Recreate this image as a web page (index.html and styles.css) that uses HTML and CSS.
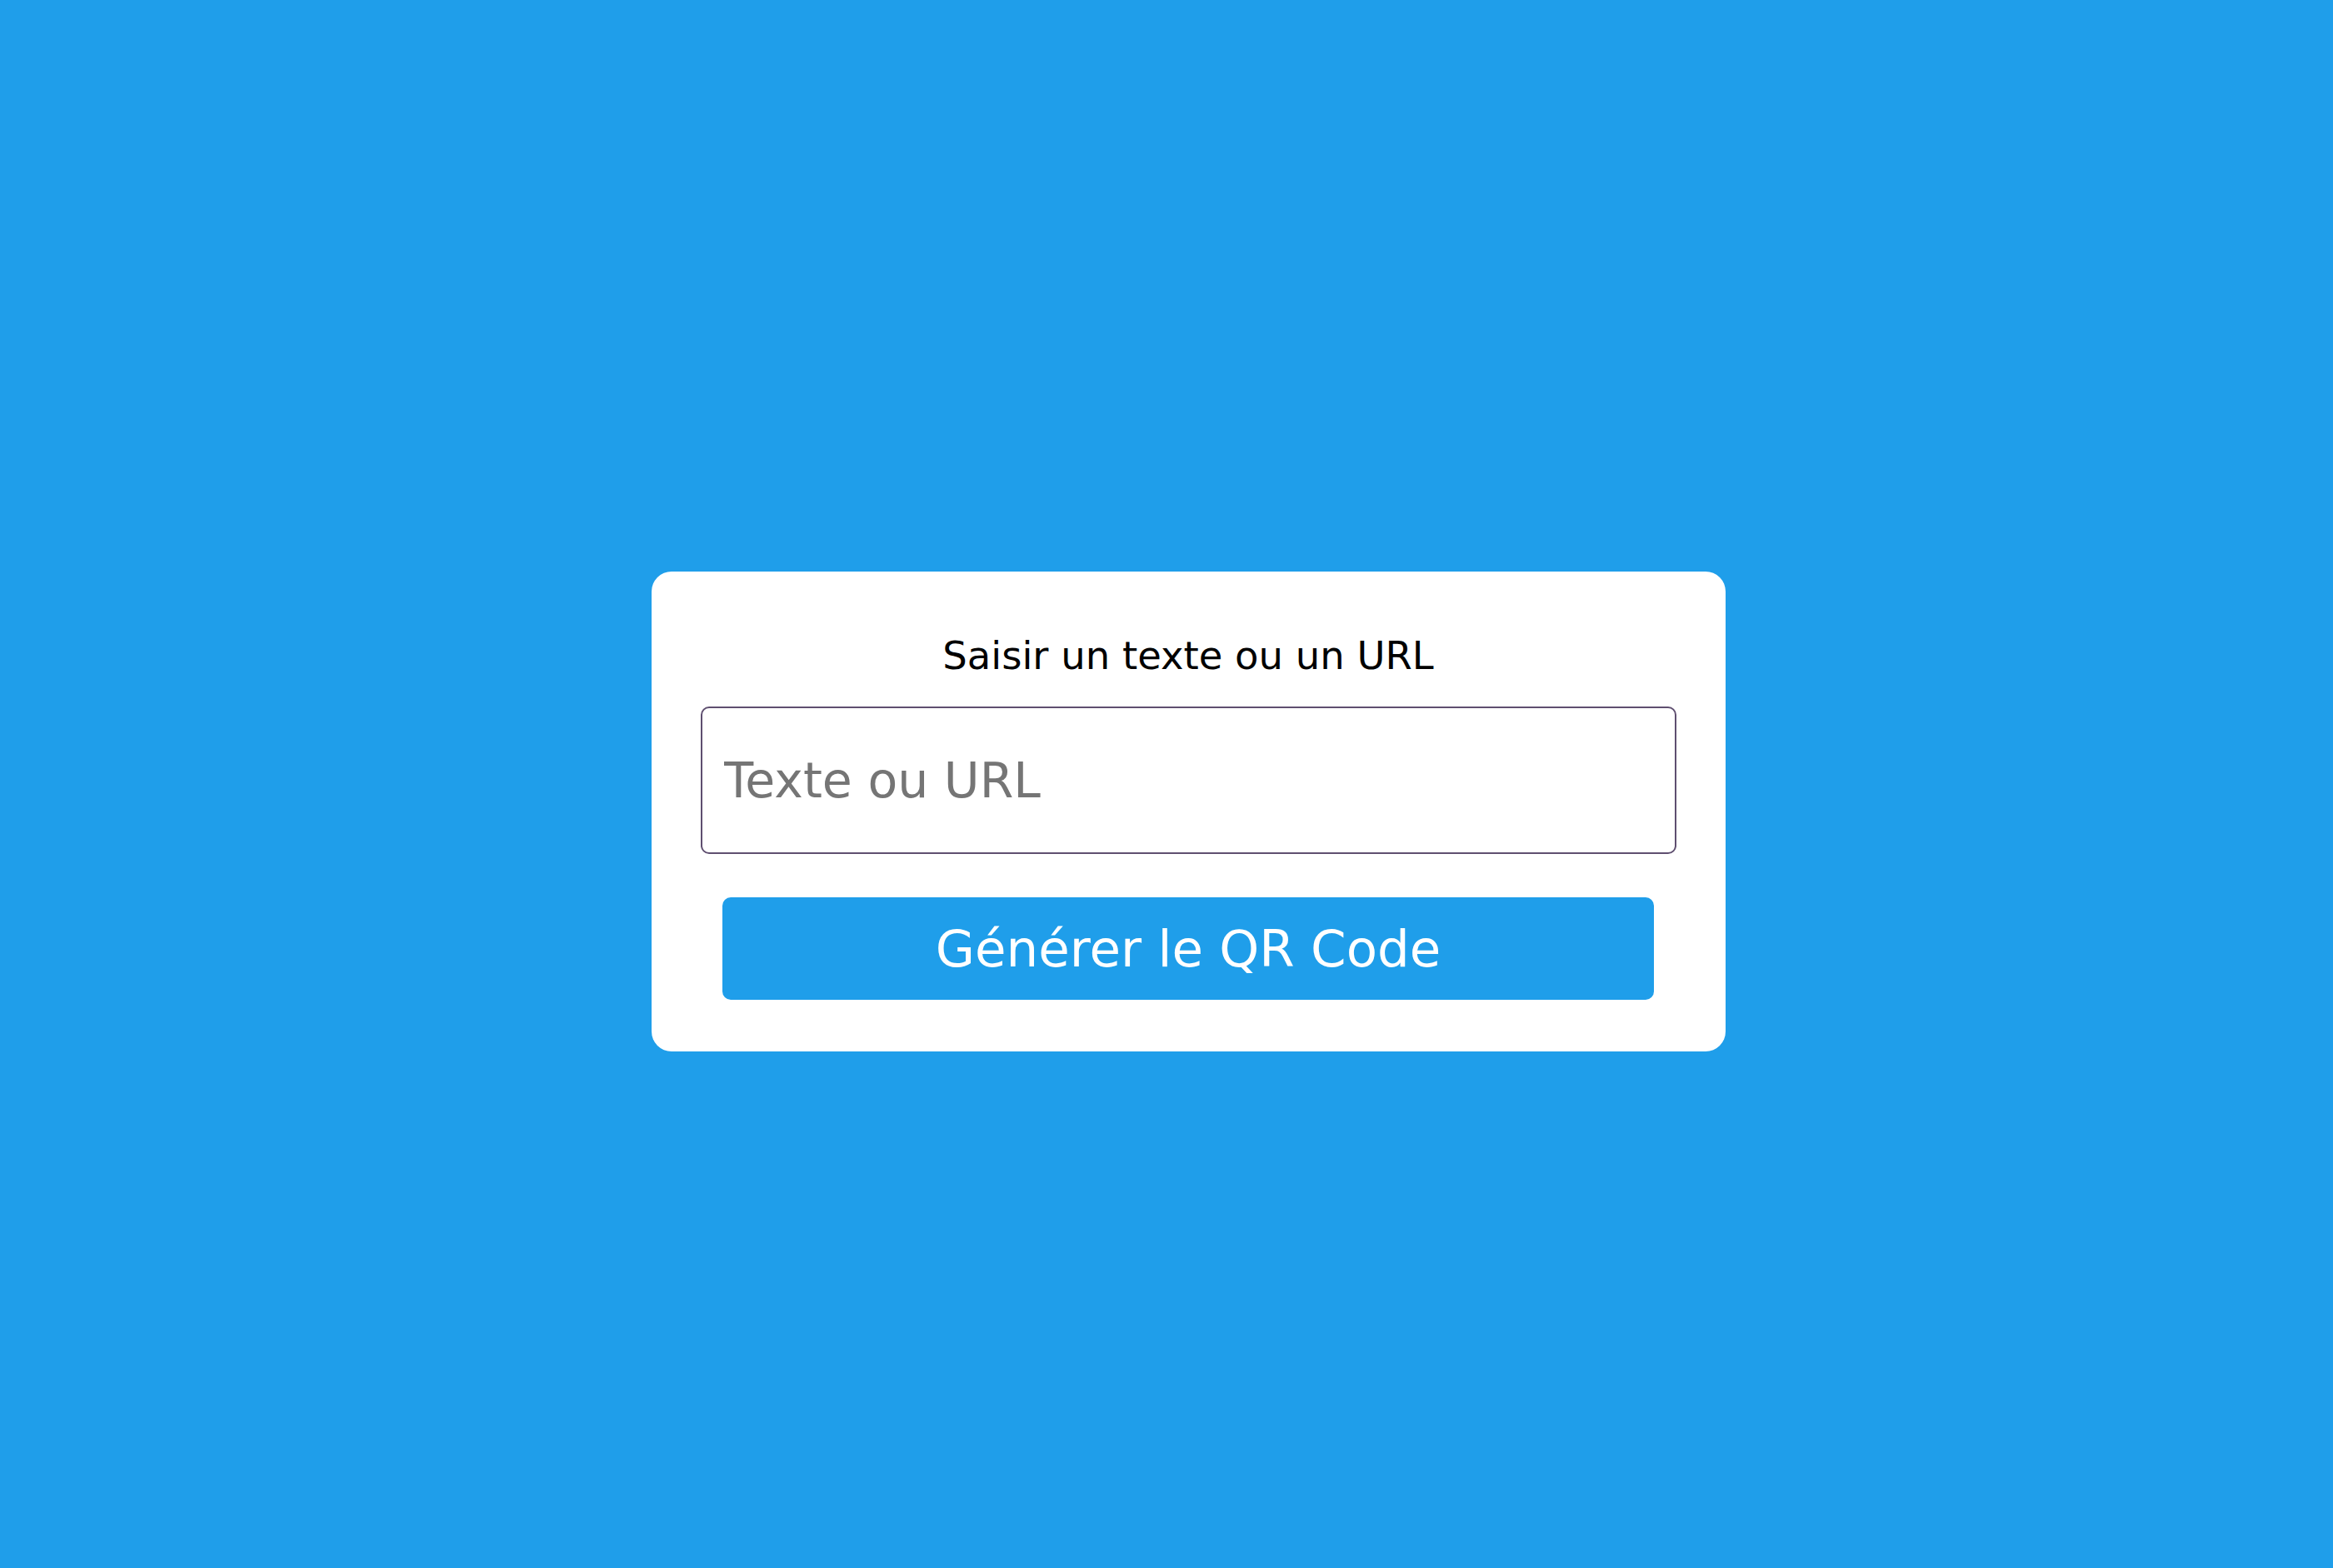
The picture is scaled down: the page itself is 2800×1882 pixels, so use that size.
FILE: index.html
```html
<!DOCTYPE html>
<html lang="fr">
<head>
<meta charset="utf-8">
<title>Générateur de QR Code</title>
<link rel="stylesheet" href="styles.css">
</head>
<body>
<main class="page">
  <div class="card">
    <p class="label">Saisir un texte ou un URL</p>
    <input class="field" type="text" placeholder="Texte ou URL">
    <button class="btn" type="button">Générer le QR Code</button>
  </div>
</main>
</body>
</html>
```
FILE: styles.css
```css
* { box-sizing: border-box; }
html, body { margin: 0; height: 100%; }
body {
  background: #1f9eea;
  font-family: "DejaVu Sans", "Noto Sans", sans-serif;
}
.page {
  height: 100%;
  display: flex;
  align-items: center;
  justify-content: center;
  padding: 66px 0 0 52px;
}
.card {
  width: 1289px;
  background: #ffffff;
  border-radius: 24px;
  padding: 76px 59px 62px;
  display: flex;
  flex-direction: column;
  align-items: center;
}
.label {
  margin: 0 0 36px;
  font-size: 46.5px;
  line-height: 50px;
  color: #000;
}
.field {
  width: 100%;
  height: 177px;
  border: 2px solid #5f4f70;
  border-radius: 10px;
  padding: 0 26px;
  font-family: inherit;
  font-size: 58.5px;
  color: #333;
  outline: none;
}
.field::placeholder { color: #757575; }
.btn {
  margin-top: 52px;
  width: 1118px;
  height: 123px;
  border: none;
  border-radius: 10px;
  background: #1f9eea;
  color: #fff;
  font-family: inherit;
  font-size: 61px;
}
```
